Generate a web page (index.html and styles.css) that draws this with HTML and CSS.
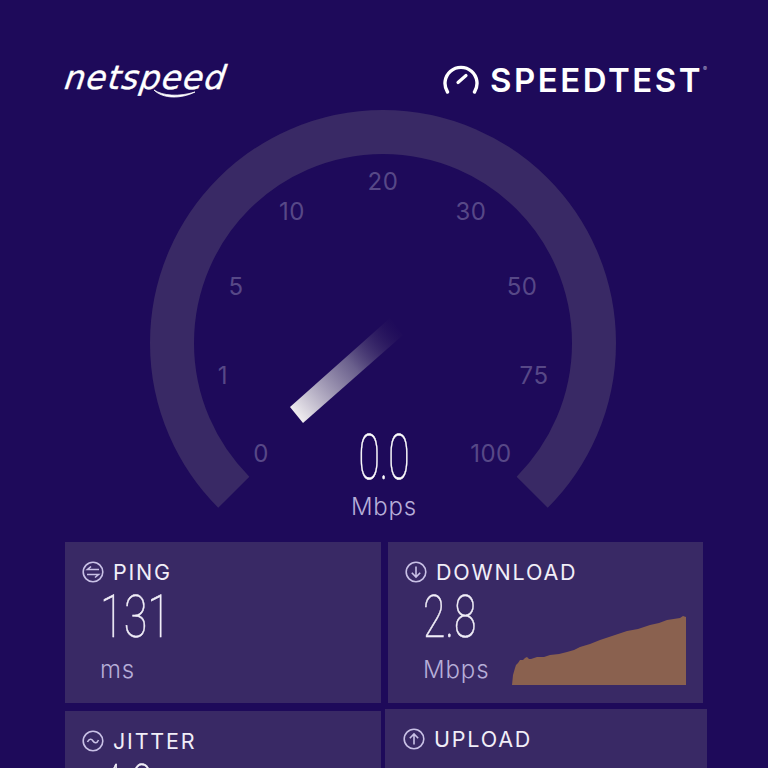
FILE: index.html
```html
<!DOCTYPE html>
<html lang="en">
<head>
  <meta charset="UTF-8">
  <meta name="viewport" content="width=device-width, initial-scale=1.0">
  <title>Speedtest</title>
  <link rel="stylesheet" href="styles.css">
</head>
<body>
  <header class="top">
    <div class="netspeed">
      <span class="netspeed-name">netspeed</span>
      <svg class="netspeed-swoosh" width="44" height="10" viewBox="0 0 44 10">
        <path d="M1 1 C10 7 26 8 42 3 C28 10 10 10 1 1 Z" fill="#fff" stroke="#fff" stroke-width="0.8"/>
      </svg>
    </div>
    <div class="speedtest">
      <svg width="36" height="32" viewBox="0 0 36 32">
        <path d="M4.5 28 A16 16 0 1 1 31.5 28" fill="none" stroke="#fff" stroke-width="3.4" stroke-linecap="round"/>
        <path d="M15 18.5 L23 11.5" fill="none" stroke="#fff" stroke-width="3.2" stroke-linecap="round"/>
      </svg>
      <span class="speedtest-name">SPEEDTEST</span><sup class="reg">®</sup>
    </div>
  </header>

  <section class="gauge">
    <svg width="490" height="437" viewBox="140 105 490 437">
      <defs>
        <linearGradient id="needle" gradientUnits="userSpaceOnUse" x1="297" y1="415" x2="399" y2="326">
          <stop offset="0" stop-color="#efecef"/>
          <stop offset="0.55" stop-color="#7d7599" stop-opacity="0.8"/>
          <stop offset="1" stop-color="#38285f" stop-opacity="0"/>
        </linearGradient>
      </defs>
      <path class="dial" d="M233.8 492.2 A211 211 0 1 1 532.2 492.2"/>
      <g class="ticks">
        <text x="261" y="462">0</text>
        <text x="223" y="384">1</text>
        <text x="236" y="295">5</text>
        <text x="292" y="220">10</text>
        <text x="383" y="190">20</text>
        <text x="471" y="220">30</text>
        <text x="522" y="295">50</text>
        <text x="534" y="384">75</text>
        <text x="491" y="462">100</text>
      </g>
      <polygon points="290,407 303,423 403,335 390,318" fill="url(#needle)"/>
      <text class="speed" transform="translate(384 479) scale(0.62 1)">0.0</text>
      <text class="speed-unit" x="384" y="515">Mbps</text>
    </svg>
  </section>

  <section class="stats">
    <div class="card">
      <div class="card-head">
        <svg class="icon" width="22" height="22" viewBox="0 0 22 22">
          <circle cx="11" cy="11" r="9.8"/>
          <path d="M17 8.5 H5.5 L9 5.5 M5 13.5 H16.5 L13 16.5"/>
        </svg>
        <span>PING</span>
      </div>
      <div class="value value-wide">131</div>
      <div class="unit">ms</div>
    </div>
    <div class="card">
      <div class="card-head">
        <svg class="icon" width="22" height="22" viewBox="0 0 22 22">
          <circle cx="11" cy="11" r="9.8"/>
          <path d="M11 5.5 V16 M6.8 11.8 L11 16 L15.2 11.8"/>
        </svg>
        <span>DOWNLOAD</span>
      </div>
      <div class="value">2.8</div>
      <div class="unit">Mbps</div>
      <svg class="spark" width="174" height="69" viewBox="0 0 174 69">
        <polygon points="0,69 1,59 3,52 4,49 6,47 8,44 11,44 13,42 15,41 17,43 19,43 25,41 32,41 38,39 47,38 55,36 62,34 68,31 78,28 88,24 100,20 115,15 126,13 138,9 147,7 155,4 168,2 171,0 174,1 174,69"/>
      </svg>
    </div>
    <div class="card">
      <div class="card-head">
        <svg class="icon" width="22" height="22" viewBox="0 0 22 22">
          <circle cx="11" cy="11" r="9.8"/>
          <path d="M5.5 12 C7 8.5 9.5 8.5 11 11 C12.5 13.5 15 13.5 16.5 10"/>
        </svg>
        <span>JITTER</span>
      </div>
      <div class="value">4.9</div>
      <div class="unit">ms</div>
    </div>
    <div class="card card-upload">
      <div class="card-head">
        <svg class="icon" width="22" height="22" viewBox="0 0 22 22">
          <circle cx="11" cy="11" r="9.8"/>
          <path d="M11 16.5 V6 M6.8 10.2 L11 6 L15.2 10.2"/>
        </svg>
        <span>UPLOAD</span>
      </div>
    </div>
  </section>
</body>
</html>
```

FILE: styles.css
```css
html, body {
  height: 768px;
  overflow: hidden;
}
body {
  margin: 0;
  padding: 0 65px;
  background-color: #1e0a5a;
  color: #f1eef8;
  font-family: Inter, "Liberation Sans", sans-serif;
}

.top {
  height: 105px;
  display: flex;
  justify-content: space-between;
  align-items: flex-start;
  padding-top: 60px;
  box-sizing: border-box;
}
.netspeed {
  position: relative;
}
.netspeed-name {
  display: block;
  font-family: "DejaVu Sans", sans-serif;
  font-style: italic;
  font-size: 33px;
  line-height: 36px;
  letter-spacing: 1px;
  color: #fff;
  -webkit-text-stroke: 0.3px #fff;
  transform: skewX(-8deg);
}
.netspeed-swoosh {
  position: absolute;
  left: 88px;
  top: 29px;
}
.speedtest {
  display: flex;
  align-items: flex-start;
  margin-top: 4px;
  margin-right: -4px;
}
.speedtest-name {
  margin-left: 11px;
  font-size: 33px;
  line-height: 32px;
  font-weight: 600;
  letter-spacing: 2.5px;
  color: #fff;
}
.reg {
  font-size: 6px;
  line-height: 10px;
  color: #b9b2d4;
}

.gauge {
  height: 437px;
  margin-left: 75px;
}
.gauge svg {
  display: block;
}
.dial {
  fill: none;
  stroke: #392965;
  stroke-width: 44;
}
.ticks text {
  fill: #574887;
  font-size: 24px;
  letter-spacing: 0.5px;
  text-anchor: middle;
}
.speed {
  fill: #fff;
  stroke: #fff;
  stroke-width: 0.5;
  font-family: Roboto, sans-serif;
  font-weight: 100;
  font-size: 63px;
  text-anchor: middle;
}
.speed-unit {
  fill: #b6aed8;
  font-size: 24px;
  font-weight: 300;
  letter-spacing: 0.8px;
  text-anchor: middle;
}

.stats {
  display: grid;
  grid-template-columns: 316px 315px;
  grid-auto-rows: 161px;
  column-gap: 7px;
  row-gap: 8px;
}
.card {
  position: relative;
  background-color: #392965;
  padding: 19px 17px 0;
  box-sizing: border-box;
}
.card-upload {
  margin: -2px -4px 0 -3px;
  padding: 19px 18px 0;
}
.card-head {
  display: flex;
  align-items: center;
  gap: 9px;
  font-size: 21.5px;
  line-height: 22px;
  letter-spacing: 1.8px;
}
.icon {
  flex: none;
}
.icon circle, .icon path {
  fill: none;
  stroke: #c9c1e6;
  stroke-width: 1.6;
}
.value {
  margin: 5px 0 0 18px;
  font-family: Roboto, sans-serif;
  font-weight: 100;
  font-size: 60px;
  line-height: 58px;
  -webkit-text-stroke: 0.5px #f1eef8;
  transform: scaleX(0.68);
  transform-origin: left center;
}
.value-wide {
  transform: scaleX(0.72);
}
.unit {
  margin: 10px 0 0 18px;
  font-size: 24px;
  line-height: 28px;
  font-weight: 300;
  letter-spacing: 0.9px;
  color: #b6aed8;
}
.spark {
  position: absolute;
  right: 17px;
  bottom: 18px;
}
.spark polygon {
  fill: #8a614f;
}
```
